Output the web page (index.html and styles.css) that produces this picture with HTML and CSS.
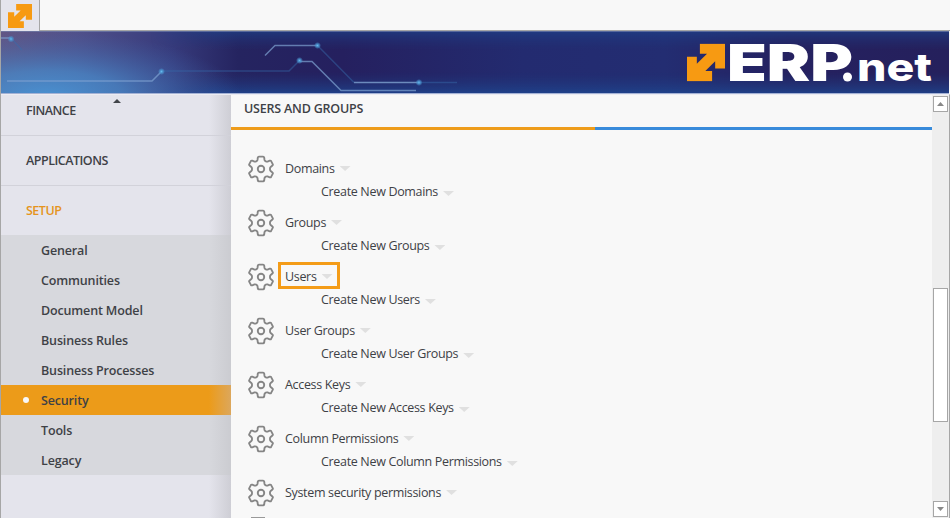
FILE: index.html
```
<!DOCTYPE html>
<html lang="en">
<head>
<meta charset="utf-8">
<title>ERP.net</title>
<link rel="stylesheet" href="styles.css">
</head>
<body>
<svg class="defs" width="0" height="0">
  <symbol id="arrows" viewBox="0 0 112 112"><path d="M38 0H112V74H83V52L54 81H74V112H0V39H29V60L59 30H38Z"/></symbol>
  <symbol id="gear" viewBox="0 0 28 30"><path d="M10.6 2.6Q10.8 1.6 11.8 1.6H16.2Q17.2 1.6 17.4 2.6L17.8 5.3Q18 6.1 18.8 6.5L19.4 6.9Q20.2 7.3 21 7L23.4 6Q24.4 5.700 24.900 6.500L26.6 9.700Q27.1 10.600 26.3 11.200L24.4 12.800Q23.700 13.400 23.700 14.100V15.900Q23.700 16.600 24.400 17.200L26.300 18.800Q27.100 19.400 26.600 20.300L24.900 23.500Q24.400 24.300 23.400 24L21 23Q20.200 22.700 19.400 23.100L18.800 23.500Q18 23.900 17.800 24.700L17.400 27.400Q17.200 28.400 16.200 28.400H11.800Q10.800 28.400 10.600 27.400L10.200 24.700Q10 23.900 9.200 23.500L8.600 23.100Q7.800 22.700 7 23L4.600 24Q3.600 24.300 3.100 23.500L1.400 20.300Q.9 19.400 1.700 18.800L3.600 17.200Q4.300 16.600 4.300 15.900V14.100Q4.300 13.400 3.600 12.800L1.700 11.200Q.9 10.600 1.400 9.700L3.100 6.500Q3.600 5.700 4.600 6L7 7Q7.800 7.300 8.600 6.900L9.200 6.500Q10 6.100 10.200 5.300Z"/><circle cx="14" cy="15" r="3.500"/></symbol>
</svg>
<div class="window">
  <header class="tabs"><div class="tab"><svg><use href="#arrows"/></svg></div><div class="tab-rest"></div></header>
  <svg class="banner" viewBox="0 0 948 63" preserveAspectRatio="none">
    <defs>
      <linearGradient id="base"><stop offset="0" stop-color="#625684"/><stop offset=".08" stop-color="#50508a"/><stop offset=".18" stop-color="#373b7c"/><stop offset=".25" stop-color="#252460"/><stop offset=".36" stop-color="#25205f"/><stop offset=".55" stop-color="#232b70"/><stop offset=".7" stop-color="#232d72"/><stop offset=".83" stop-color="#252160"/><stop offset="1" stop-color="#25205c"/></linearGradient>
      <radialGradient id="glow" gradientUnits="userSpaceOnUse" cx="0" cy="0" r="1" gradientTransform="translate(45 66) scale(195 66)"><stop offset="0" stop-color="#4a92d2"/><stop offset=".4" stop-color="#4788c8" stop-opacity=".75"/><stop offset="1" stop-color="#3d65ac" stop-opacity="0"/></radialGradient>
      <linearGradient id="shade" x2="0" y2="1"><stop offset="0" stop-color="#1e438a" stop-opacity=".65"/><stop offset=".3" stop-color="#203579" stop-opacity="0"/><stop offset=".65" stop-color="#203579" stop-opacity="0"/><stop offset="1" stop-color="#1f4790" stop-opacity=".85"/></linearGradient>
      <linearGradient id="fade"><stop offset="0" stop-color="#fff" stop-opacity="0"/><stop offset=".08" stop-color="#fff"/></linearGradient>
      <mask id="fadein"><rect x="150" width="798" height="63" fill="url(#fade)"/></mask>
      <radialGradient id="node"><stop offset="0" stop-color="#65b9ed"/><stop offset=".45" stop-color="#4b96d2" stop-opacity=".8"/><stop offset="1" stop-color="#4b96d2" stop-opacity="0"/></radialGradient>
    </defs>
    <rect width="948" height="63" fill="url(#base)"/>
    <rect x="150" width="798" height="63" fill="url(#shade)" mask="url(#fadein)"/>
    <rect width="240" height="63" fill="url(#glow)"/>
    <g fill="none" stroke="#7fa2d1" stroke-width="1.500">
      <path d="M0 7H10M6 50H151L161 40M264 24.500L274 14.500H316M299 30.500H311L340 59.500H415" opacity=".7"/>
      <path d="M353 51.500H418" opacity=".8"/>
      <path d="M161 40H288L298 30M317 15L353 51.500M418 51.500H456M10 7L21 19" stroke="#386cad" opacity=".45"/>
    </g>
    <g fill="url(#node)"><circle cx="10" cy="8" r="3.500"/><circle cx="160.500" cy="40.500" r="3.500"/><circle cx="316.500" cy="14.500" r="3.500"/><circle cx="298.500" cy="29.500" r="3.500"/><circle cx="418" cy="51.500" r="3.500"/></g>
    <path d="M0 .5H948" stroke="#7583ad" opacity=".65"/><path d="M0 62.500H948" stroke="#a4b2d5"/>
    <svg x="686" y="12.500" width="38" height="38" fill="#f79a12"><use href="#arrows"/></svg>
    <g class="wordmark"><text class="erp" x="726" y="50.300" textLength="126" lengthAdjust="spacingAndGlyphs">ERP</text><circle cx="846.500" cy="46" r="4.500"/><text class="net" x="856" y="50.300" textLength="75" lengthAdjust="spacingAndGlyphs">net</text></g>
  </svg>
  <div class="body">
    <nav class="side">
      <div class="section first">FINANCE<i class="up"></i></div>
      <div class="section">APPLICATIONS</div>
      <div class="section current">SETUP</div>
      <ul class="menu">
        <li>General</li><li>Communities</li><li>Document Model</li><li>Business Rules</li><li>Business Processes</li><li class="selected">Security</li><li>Tools</li><li>Legacy</li>
      </ul>
    </nav>
    <main class="content">
      <h1>USERS AND GROUPS</h1>
      <div class="rule"></div>
      <div class="entries">
        <div class="entry"><svg class="gear"><use href="#gear"/></svg><div><p>Domains<i></i></p><p class="sub">Create New Domains<i></i></p></div></div>
        <div class="entry"><svg class="gear"><use href="#gear"/></svg><div><p>Groups<i></i></p><p class="sub">Create New Groups<i></i></p></div></div>
        <div class="entry"><svg class="gear"><use href="#gear"/></svg><div><p class="marked">Users<i></i></p><p class="sub">Create New Users<i></i></p></div></div>
        <div class="entry"><svg class="gear"><use href="#gear"/></svg><div><p>User Groups<i></i></p><p class="sub">Create New User Groups<i></i></p></div></div>
        <div class="entry"><svg class="gear"><use href="#gear"/></svg><div><p>Access Keys<i></i></p><p class="sub">Create New Access Keys<i></i></p></div></div>
        <div class="entry"><svg class="gear"><use href="#gear"/></svg><div><p>Column Permissions<i></i></p><p class="sub">Create New Column Permissions<i></i></p></div></div>
        <div class="entry last"><svg class="gear"><use href="#gear"/></svg><div><p>System security permissions<i></i></p></div></div>
        <div class="next"></div>
      </div>
    </main>
    <div class="scroll"><div class="button"><i class="tri-up"></i></div><div class="thumb"></div><div class="button"><i class="tri-down"></i></div></div>
  </div>
</div>
</body>
</html>
```
FILE: styles.css
```
* { box-sizing: border-box; }
body { margin: 0; background: #f8f8f8; color: #3e4146; font: 12.5px/20px "Open Sans", "Noto Sans", sans-serif; letter-spacing: -.33px; overflow: hidden; }
p, h1, ul { margin: 0; padding: 0; list-style: none; }
.defs { position: absolute; }
.window { width: 950px; height: 518px; display: flex; flex-direction: column; border-left: 1px solid #a6a6a6; overflow: hidden; }
.tabs { height: 31px; flex: none; display: flex; }
.tab { width: 39px; border-right: 1px solid #a6a6a6; background: #e4e4ec; padding: 4px 0 0 7px; }
.tab svg { width: 24px; height: 24px; fill: #f79a12; display: block; }
.tab-rest { flex: 1; border-bottom: 1px solid #a6a6a6; }
.banner { width: 948px; height: 63px; flex: none; display: block; }
.wordmark { fill: #fff; font-family: Inter, sans-serif; letter-spacing: 0; }
.erp { font-size: 51px; font-weight: 900; }
.net { font-size: 38px; font-weight: 800; }
.body { flex: 1; display: flex; min-height: 0; border-right: 1px solid #a6a6a6; border-top: 1px solid #ececf2; }
.side { width: 230px; background: linear-gradient(90deg, transparent 208px, rgba(155,155,160,.3)), #e4e4ec; font-weight: 600; }
.section { height: 50px; border-bottom: 1px solid #d2d2da; padding: 15px 25px 0; position: relative; letter-spacing: -.5px; }
.section.first { height: 41px; padding-top: 6px; }
.section.current { color: #e5941d; border: 0; height: 49px; }
.up { position: absolute; left: 112px; top: 4px; border: 4px solid transparent; border-top: 0; border-bottom-color: #42454a; }
.menu { background: linear-gradient(90deg, transparent 208px, rgba(155,155,160,.2)), #d7d8dd; letter-spacing: -.15px; }
.menu li { height: 30px; padding: 6px 40px 4px; }
.menu .selected { background: linear-gradient(90deg, #ec9b19 208px, #dca75c); padding-left: 22px; display: flex; gap: 12px; }
.selected::before { content: ""; width: 6px; height: 6px; margin-top: 6px; border-radius: 50%; background: #f8f8f8; }
.content { flex: 1; overflow: hidden; }
h1 { font-size: 12.5px; line-height: 20px; font-weight: 600; padding: 4px 13px 0; height: 32px; letter-spacing: -.2px; }
.rule { height: 3px; background: linear-gradient(90deg, #ee9c1a 364px, #388bdb 364px); }
.entries { padding: 24px 0 0 17px; }
.entry { height: 54px; display: flex; gap: 11px; }
.gear { width: 26px; height: 28px; margin-top: 1px; fill: none; stroke: #858585; stroke-width: 2; }
.entry p { height: 23px; padding-top: 5px; display: flex; width: max-content; }
.entry p.sub { padding-left: 36px; }
.entry i { margin: 7px 0 0 5px; width: 11px; height: 5px; background: #e0e0e0; clip-path: polygon(0 0, 100% 0, 50% 100%); }
.entry .sub i { margin-top: 9px; }
.entry .marked { outline: 3px solid #f49c18; height: 21px; padding: 2px 4px 0; margin: 3px 0 -1px -4px; }
.entry.last { height: 39px; }
.next { margin-left: 3px; width: 14px; height: 10px; background: #999; }
.scroll { width: 17px; background: #eee; padding: 1px; display: flex; flex-direction: column; justify-content: space-between; }
.button { width: 15px; height: 16px; border: 1px solid #a6a6a6; background: #fff; display: grid; place-items: center; }
.thumb { width: 15px; height: 134px; border: 1px solid #a6a6a6; background: #fff; margin-top: 97px; }
.tri-up, .tri-down { width: 7px; height: 4px; background: #888; clip-path: polygon(50% 0, 100% 100%, 0 100%); }
.tri-down { clip-path: polygon(0 0, 100% 0, 50% 100%); }
```
